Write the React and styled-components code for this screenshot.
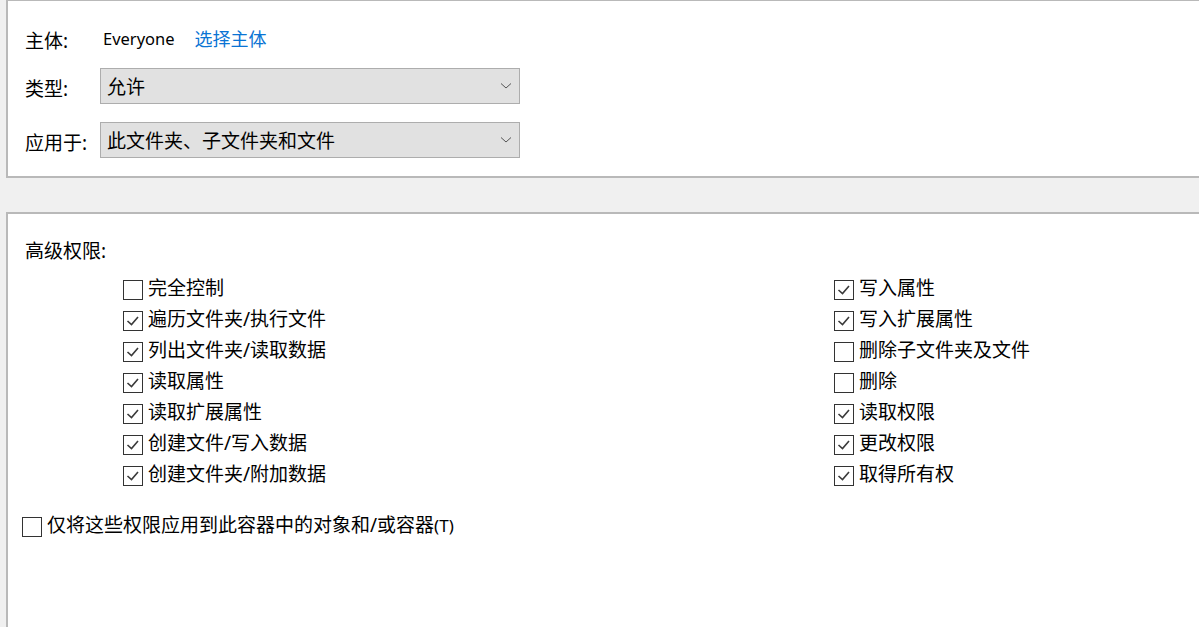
import React from "react";
import styled, { createGlobalStyle } from "styled-components";

const GlobalStyle = createGlobalStyle`
  html, body {
    margin: 0;
    padding: 0;
    background: #f0f0f0;
    overflow: hidden;
  }
  body {
    font-family: "Noto Sans", "Noto Sans CJK SC", sans-serif;
    font-size: 19px;
    color: #000;
  }
`;

const left = [
  ["完全控制", false],
  ["遍历文件夹/执行文件", true],
  ["列出文件夹/读取数据", true],
  ["读取属性", true],
  ["读取扩展属性", true],
  ["创建文件/写入数据", true],
  ["创建文件夹/附加数据", true],
];

const right = [
  ["写入属性", true],
  ["写入扩展属性", true],
  ["删除子文件夹及文件", false],
  ["删除", false],
  ["读取权限", true],
  ["更改权限", true],
  ["取得所有权", true],
];

function Check({ checked }) {
  return (
    <Box>
      {checked && (
        <svg width="18" height="18" viewBox="0 0 18 18">
          <polyline
            points="3.5,9 7.5,12.5 14,5"
            fill="none"
            stroke="#3a3a3a"
            strokeWidth="1.6"
          />
        </svg>
      )}
    </Box>
  );
}

function Select({ value }) {
  return (
    <SelectBox>
      <span>{value}</span>
      <svg width="12" height="8" viewBox="0 0 12 8">
        <polyline points="1,1.5 6,6 11,1.5" fill="none" stroke="#555" strokeWidth="1" />
      </svg>
    </SelectBox>
  );
}

export default function App() {
  return (
    <Page>
      <GlobalStyle />
      <Panel $top>
        <Row $mt={22}>
          <Label>主体:</Label>
          <Value>Everyone</Value>
          <Link>选择主体</Link>
        </Row>
        <Row $mt={15}>
          <Label>类型:</Label>
          <Select value="允许" />
        </Row>
        <Row $mt={18}>
          <Label>应用于:</Label>
          <Select value="此文件夹、子文件夹和文件" />
        </Row>
      </Panel>
      <Panel>
        <Heading>高级权限:</Heading>
        <Grid>
          <Column>
            {left.map(([t, c]) => (
              <CheckRow key={t}>
                <Check checked={c} />
                <span>{t}</span>
              </CheckRow>
            ))}
          </Column>
          <Column>
            {right.map(([t, c]) => (
              <CheckRow key={t}>
                <Check checked={c} />
                <span>{t}</span>
              </CheckRow>
            ))}
          </Column>
        </Grid>
        <BottomRow>
          <Check checked={false} />
          <span>
            仅将这些权限应用到此容器中的对象和/或容器<Small>(T)</Small>
          </span>
        </BottomRow>
      </Panel>
    </Page>
  );
}

const Page = styled.div`
  height: 647px;
  display: flex;
  flex-direction: column;
  gap: 34px;
  padding-left: 6px;
  overflow: hidden;
`;

const Panel = styled.div`
  box-sizing: border-box;
  background: #fff;
  border: 2px solid #b9b9b9;
  margin-right: -20px;
  margin-top: ${(p) => (p.$top ? "-1px" : "0")};
  height: ${(p) => (p.$top ? "179px" : "auto")};
  flex: ${(p) => (p.$top ? "none" : "1")};
  display: flex;
  flex-direction: column;
`;

const Row = styled.div`
  display: flex;
  align-items: center;
  height: ${(p) => (p.$mt === 22 ? "30px" : "36px")};
  margin-top: ${(p) => p.$mt}px;
  padding-left: 17px;
`;

const Label = styled.div`
  width: 75px;
  padding-top: 3px;
  flex: none;
`;

const Value = styled.span`
  font-size: 16.5px;
  margin-left: 3px;
  margin-right: 20px;
`;

const Link = styled.span`
  color: #0a74d4;
  font-size: 18px;
`;

const SelectBox = styled.div`
  box-sizing: border-box;
  width: 420px;
  height: 36px;
  background: #e1e1e1;
  border: 1px solid #adadad;
  display: flex;
  align-items: center;
  justify-content: space-between;
  padding: 0 7px 0 6px;
`;

const Heading = styled.div`
  margin-top: 25px;
  padding-left: 17px;
  line-height: 24px;
`;

const Grid = styled.div`
  display: grid;
  grid-template-columns: 711px 1fr;
  margin-top: 11px;
  padding-left: 115px;
`;

const Column = styled.div`
  display: flex;
  flex-direction: column;
`;

const CheckRow = styled.div`
  display: flex;
  align-items: center;
  gap: 5px;
  height: 31px;
  line-height: 31px;

  span {
    margin-top: -2px;
  }
`;

const BottomRow = styled(CheckRow)`
  margin-top: 20px;
  padding-left: 14px;
`;

const Box = styled.div`
  box-sizing: border-box;
  width: 20px;
  height: 20px;
  border: 1px solid #333;
  background: #fff;
  display: flex;
  align-items: center;
  justify-content: center;
  flex: none;
`;

const Small = styled.span`
  font-size: 17px;
`;
